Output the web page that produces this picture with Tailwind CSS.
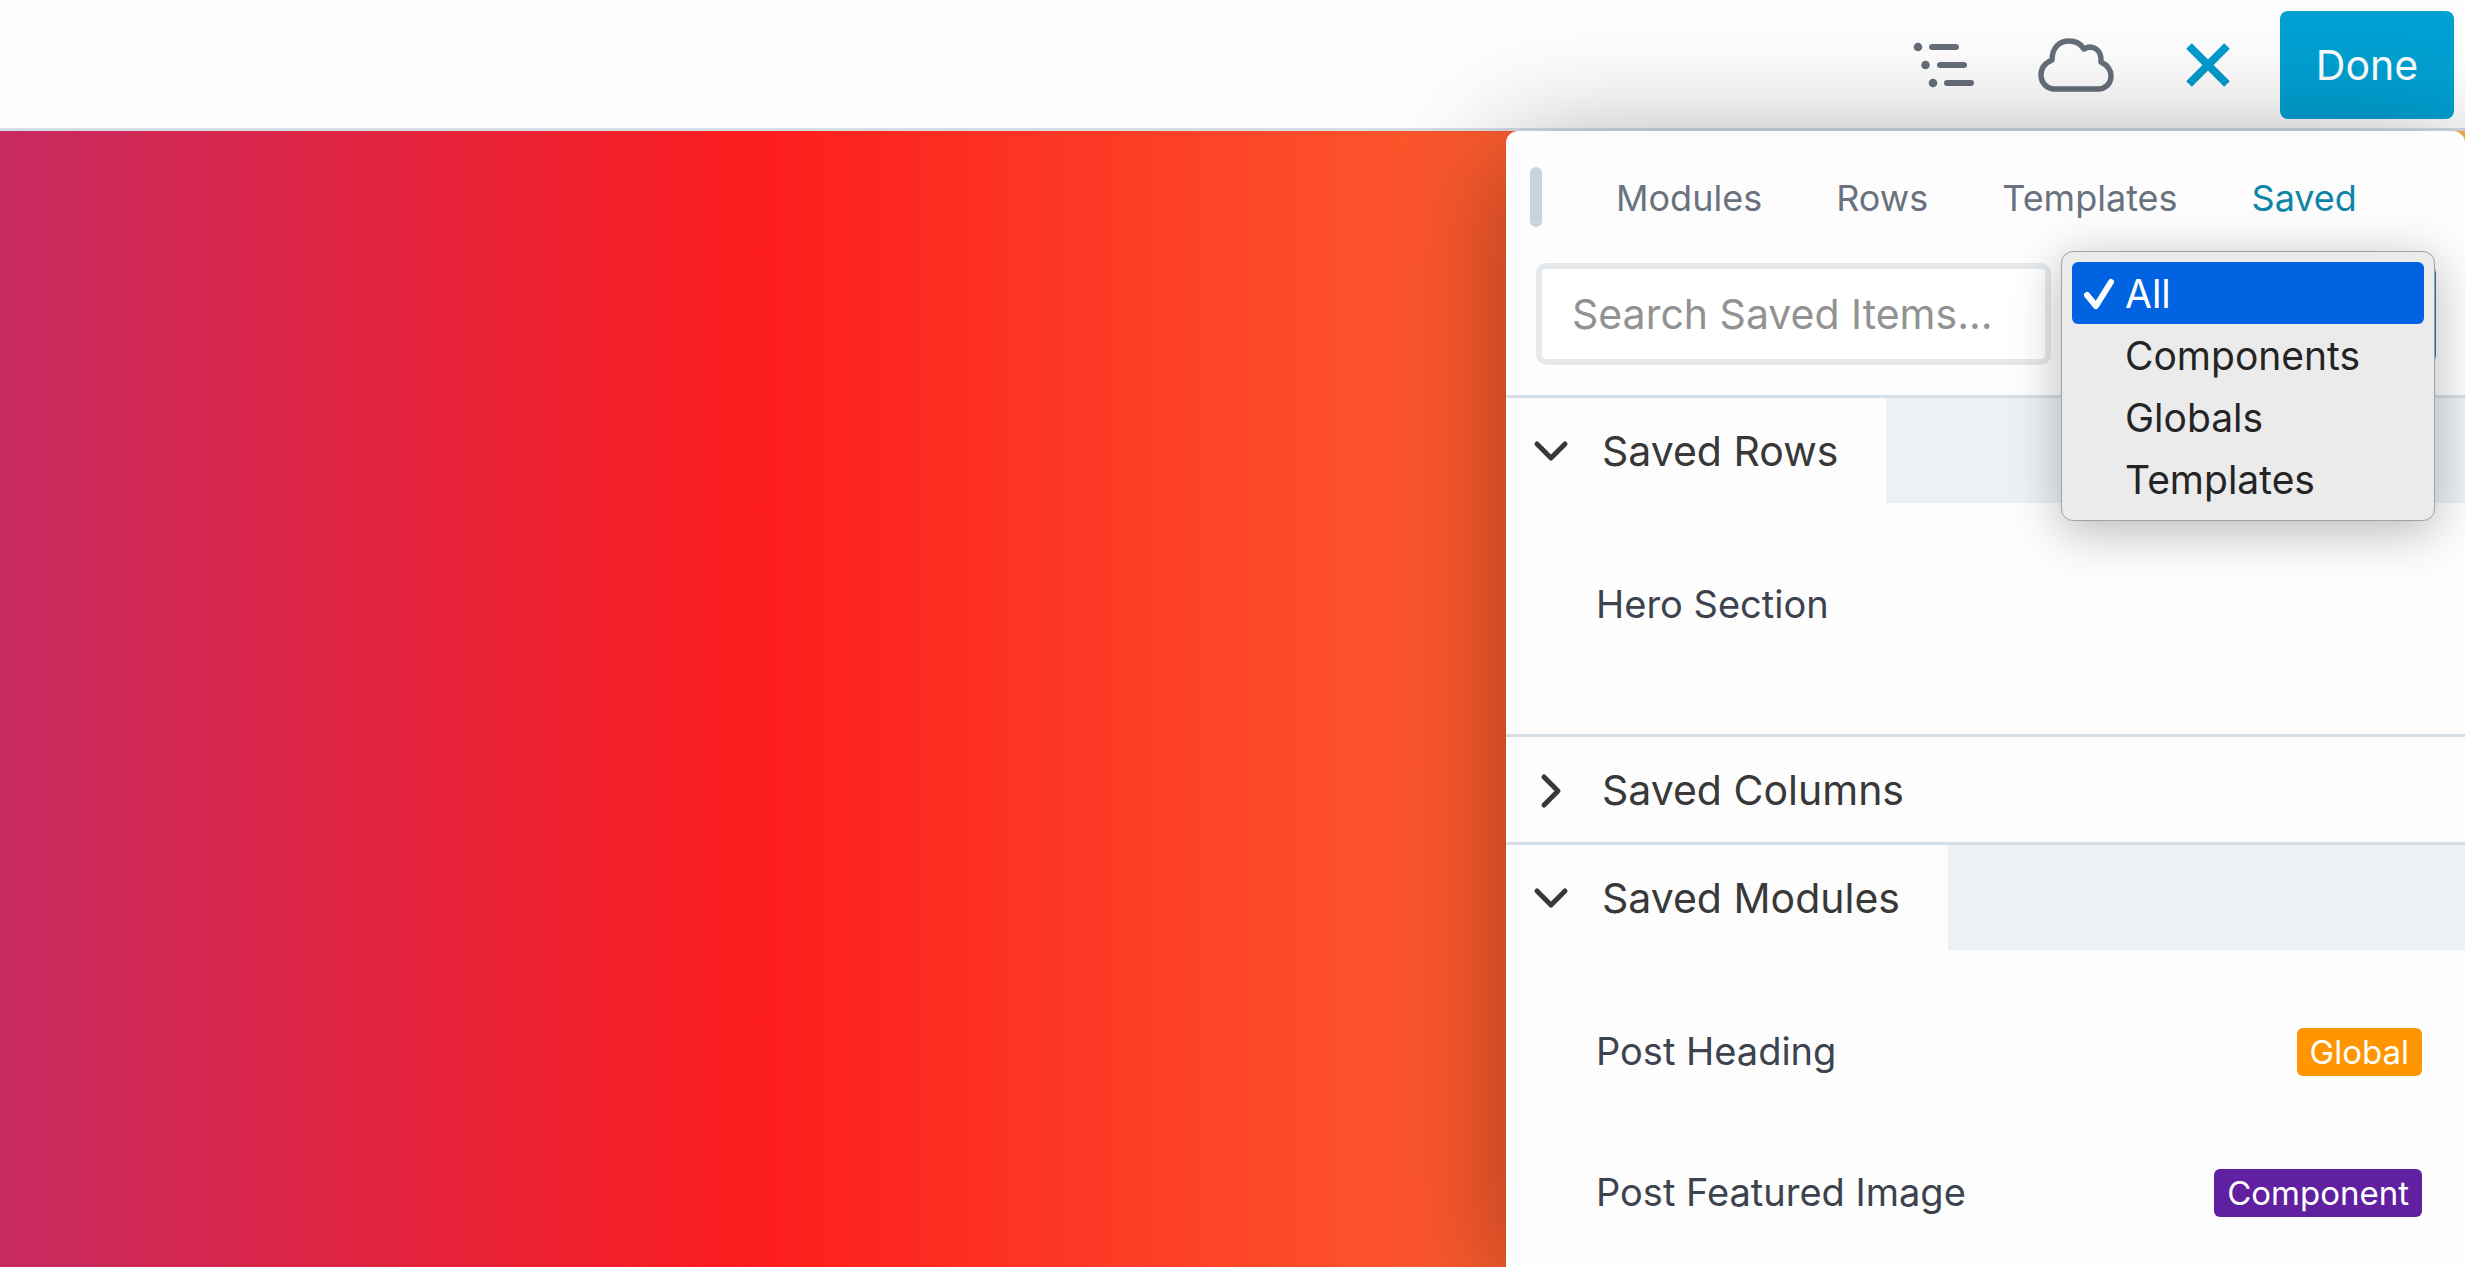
<!DOCTYPE html>
<html lang="en">
<head>
  <meta charset="UTF-8" />
  <meta name="viewport" content="width=device-width, initial-scale=1.0" />
  <title>Page Builder - Saved</title>
  <script src="https://cdn.jsdelivr.net/npm/@tailwindcss/browser@4"></script>
</head>

<body class="h-screen flex flex-col overflow-hidden bg-[#fdfdfd] font-['Inter','Liberation_Sans',sans-serif]">

  <!-- Top bar -->
  <header class="flex shrink-0 items-center justify-end border-b-3 border-[#d5dde5] bg-[#fdfdfd] pt-[11px] pr-[11px] pb-[9px]">
    <button aria-label="Outline" class="mr-[63px] text-[#666e7a]">
      <svg class="h-[46px] w-[62px]" viewBox="0 0 62 46" fill="none" stroke="currentColor" stroke-width="6" stroke-linecap="round">
        <path d="M19 5h24M27 23h24M34 41h24" />
        <g fill="currentColor" stroke="none">
          <circle cx="5" cy="5" r="4.3" />
          <circle cx="12.500" cy="23" r="4.3" />
          <circle cx="20" cy="41" r="4.3" />
        </g>
      </svg>
    </button>
    <button aria-label="Cloud" class="mr-[71px] text-[#666e7a]">
      <svg class="h-[54px] w-[76px]" viewBox="0 0 76 54" fill="none" stroke="currentColor" stroke-width="5.500" stroke-linejoin="round">
        <path d="M17 51C9 51 3 45 3 37C3 30 7 25 14 22C14 10 21 3 31 3C38 3 43 6 46 11C55 6 64 12 63 24C69 27 73 31 73 38C73 46 67 51 60 51Z" />
      </svg>
    </button>
    <button aria-label="Close" class="mr-[49px] text-[#009bcd]">
      <svg class="h-[46px] w-[46px]" viewBox="0 0 46 46" fill="none" stroke="currentColor" stroke-width="8">
        <path d="M4 4L42 42M42 4L4 42" />
      </svg>
    </button>
    <button class="h-[108px] w-[174px] rounded-lg bg-[#00a0d2] pt-[2px] text-[41px] text-white">Done</button>
  </header>

  <!-- Canvas -->
  <main class="flex min-h-0 flex-1 justify-end bg-linear-to-r/srgb from-[#c62a61] via-[#fd1d1d] via-31% to-[#fcb045]">

    <!-- Content panel -->
    <aside class="w-[959px] rounded-t-xl bg-[#fdfdfd] shadow-[0_20px_120px_rgba(0,0,0,0.38)]">
      <nav class="flex h-[132px] items-center gap-[74px] pl-6 text-[36px] text-[#69727d]">
        <span class="h-[60px] w-[12px] rounded-full bg-[#cbd3da]"></span>
        <a href="#" class="pt-[2px]">Modules</a>
        <a href="#" class="pt-[2px]">Rows</a>
        <a href="#" class="pt-[2px]">Templates</a>
        <a href="#" class="pt-[2px] text-[#0e85a8]">Saved</a>
      </nav>

      <div class="relative flex gap-3 pr-[29px] pb-[30px] pl-[30px]">
        <input type="text" aria-label="Search saved items" placeholder="Search Saved Items..."
          class="h-[102px] min-w-0 flex-1 rounded-[10px] border-6 border-[#e5e9ec] bg-white px-[30px] text-[41px] placeholder:text-[#929292]" />
        <select aria-label="Filter" class="h-[102px] w-[373px] appearance-none rounded-[10px] border-6 border-[#0e85a8] bg-white">
          <option></option>
        </select>

        <!-- Filter menu -->
        <ul role="listbox" aria-label="Filter" class="absolute -top-3 right-[30px] z-10 w-[374px] rounded-xl border border-[#a2a2a2] bg-[#ebebeb] p-[10px] text-[39px] leading-[60px] text-[#242424] shadow-[0_10px_50px_rgba(0,0,0,0.28)]">
          <li role="option" aria-selected="true" class="flex items-center rounded-md bg-[#0063e1] pt-[2px] pl-[11px] text-white">
            <svg class="mr-[10px] h-[32px] w-[32px]" viewBox="0 0 32 32" fill="none" stroke="currentColor" stroke-width="6" stroke-linecap="round" stroke-linejoin="round">
              <path d="M4 17L13 28L28 4" />
            </svg>
            All
          </li>
          <li role="option" class="pt-[2px] pl-[53px]">Components</li>
          <li role="option" class="pt-[2px] pl-[53px]">Globals</li>
          <li role="option" class="pt-[2px] pl-[53px]">Templates</li>
        </ul>
      </div>

      <!-- Saved rows -->
      <section class="border-t-3 border-[#d5dde5]">
        <div class="flex bg-[#edf1f4]">
          <button class="flex h-[105px] items-center bg-[#fdfdfd] pt-[2px] pr-[48px] pl-[27px] text-[41px] text-[#383838]">
            <svg class="mr-[33px] h-[36px] w-[36px]" viewBox="0 0 36 36" fill="none" stroke="currentColor" stroke-width="5" stroke-linecap="round" stroke-linejoin="round">
              <path d="M4 10L18 24L32 10" />
            </svg>
            Saved Rows
          </button>
        </div>
        <ul class="pt-[31px] pb-[59px] pl-[90px] text-[38px] text-[#3c434e]">
          <li class="flex h-[141px] items-center">Hero Section</li>
        </ul>
      </section>

      <!-- Saved columns -->
      <section class="border-t-3 border-[#d5dde5]">
        <button class="flex h-[105px] items-center pt-[2px] pl-[27px] text-[41px] text-[#383838]">
          <svg class="mr-[33px] h-[36px] w-[36px]" viewBox="0 0 36 36" fill="none" stroke="currentColor" stroke-width="5" stroke-linecap="round" stroke-linejoin="round">
            <path d="M11 4L25 18L11 32" />
          </svg>
          Saved Columns
        </button>
      </section>

      <!-- Saved modules -->
      <section class="border-t-3 border-[#d5dde5]">
        <div class="flex bg-[#edf1f4]">
          <button class="flex h-[105px] items-center bg-[#fdfdfd] pt-[2px] pr-[48px] pl-[27px] text-[41px] text-[#383838]">
            <svg class="mr-[33px] h-[36px] w-[36px]" viewBox="0 0 36 36" fill="none" stroke="currentColor" stroke-width="5" stroke-linecap="round" stroke-linejoin="round">
              <path d="M4 10L18 24L32 10" />
            </svg>
            Saved Modules
          </button>
        </div>
        <ul class="pt-[31px] pr-[43px] pl-[90px] text-[38px] text-[#3c434e]">
          <li class="flex h-[141px] items-center justify-between">
            Post Heading
            <span class="rounded-md bg-[#ff9500] px-[13px] text-[33px] leading-[48px] text-white">Global</span>
          </li>
          <li class="flex h-[141px] items-center justify-between">
            Post Featured Image
            <span class="rounded-md bg-[#6020a0] px-[13px] text-[33px] leading-[48px] text-white">Component</span>
          </li>
        </ul>
      </section>
    </aside>
  </main>

</body>
</html>
